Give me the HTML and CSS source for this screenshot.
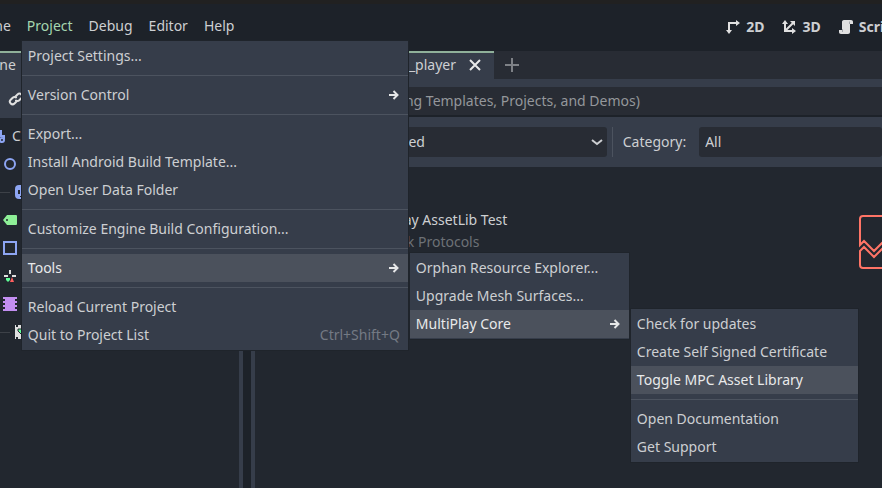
FILE: index.html
```html
<!DOCTYPE html>
<html lang="en">
<head>
    <meta charset="utf-8">
    <title>Editor</title>
    <link rel="stylesheet" href="styles.css">
</head>
<body>
    <header class="topbar">
        <nav class="menubar">
            <button class="menu-title">Scene</button>
            <div class="menu-holder">
                <button class="menu-title active">Project</button>
                <ul class="popup popup-project">
                    <li><button class="item">Project Settings...</button></li>
                    <li class="separator"></li>
                    <li><button class="item">Version Control
                        <svg class="arrow" width="10" height="10" viewBox="0 0 10 10"><path d="M0 5h8M4.500 1l4 4-4 4"/></svg></button></li>
                    <li class="separator"></li>
                    <li><button class="item">Export...</button></li>
                    <li><button class="item">Install Android Build Template...</button></li>
                    <li><button class="item">Open User Data Folder</button></li>
                    <li class="separator"></li>
                    <li><button class="item">Customize Engine Build Configuration...</button></li>
                    <li class="separator"></li>
                    <li class="has-sub">
                        <button class="item hover">Tools
                            <svg class="arrow" width="10" height="10" viewBox="0 0 10 10"><path d="M0 5h8M4.500 1l4 4-4 4"/></svg></button>
                        <ul class="popup popup-tools">
                            <li><button class="item">Orphan Resource Explorer...</button></li>
                            <li><button class="item">Upgrade Mesh Surfaces...</button></li>
                            <li class="has-sub">
                                <button class="item hover">MultiPlay Core
                                    <svg class="arrow" width="10" height="10" viewBox="0 0 10 10"><path d="M0 5h8M4.500 1l4 4-4 4"/></svg></button>
                                <ul class="popup popup-core">
                                    <li><button class="item">Check for updates</button></li>
                                    <li><button class="item">Create Self Signed Certificate</button></li>
                                    <li><button class="item hover">Toggle MPC Asset Library</button></li>
                                    <li class="separator"></li>
                                    <li><button class="item">Open Documentation</button></li>
                                    <li><button class="item">Get Support</button></li>
                                </ul>
                            </li>
                        </ul>
                    </li>
                    <li class="separator"></li>
                    <li><button class="item">Reload Current Project</button></li>
                    <li><button class="item">Quit to Project List <span class="shortcut">Ctrl+Shift+Q</span></button></li>
                </ul>
            </div>
            <button class="menu-title">Debug</button>
            <button class="menu-title">Editor</button>
            <button class="menu-title">Help</button>
        </nav>
        <div class="screens">
            <button class="screen">
                <svg width="16" height="16" viewBox="0 0 16 16"><path class="line" d="M4 12V4h8"/><path class="fill" d="M1 11h6L4 15zM11 1v6l4-3z"/></svg>
                2D
            </button>
            <button class="screen">
                <svg width="16" height="16" viewBox="0 0 16 16"><path class="line" d="M4 4v8h8M4 12l8-8"/><path class="fill" d="M1 5h6L4 1zM11 9v6l4-3zM9 2h5v5z"/></svg>
                3D
            </button>
            <button class="screen">
                <svg width="16" height="16" viewBox="0 0 16 16"><path class="fill" d="M6 1C4.500 1 4 2 4 3v8H1v2c0 1.300.7 2 2 2h7c1.300 0 2-.7 2-2V5h3V3c0-1.300-.7-2-2-2z"/><path class="cut" d="M4.500 10v3M11.500 5V2.500"/></svg>
                Script
            </button>
        </div>
    </header>

    <div class="workspace">
        <aside class="dock">
            <div class="tabs">
                <button class="tab dock-tab">Scene</button>
            </div>
            <div class="dock-tools">
                <svg width="16" height="16" viewBox="0 0 16 16"><g fill="none" stroke="#e0e0e0" stroke-width="2" stroke-linecap="round"><path d="M7.500 5.500l2-2a2.600 2.600 0 0 1 3.800 3.800l-2 2a2.600 2.600 0 0 1-3.300.2"/><path d="M8.500 10.500l-2 2a2.600 2.600 0 0 1-3.800-3.800l2-2a2.600 2.600 0 0 1 3.300-.2"/></g></svg>
            </div>
            <ul class="tree">
                <li class="root">
                    <svg width="16" height="16" viewBox="0 0 16 16"><g fill="none" stroke="#8da5f3" stroke-width="2"><path d="M12 2v5M10 8h5v3"/><circle cx="13" cy="12" r="2"/></g></svg>
                    Core
                </li>
                <li><svg width="16" height="16" viewBox="0 0 16 16"><circle cx="8" cy="8" r="5" fill="none" stroke="#8da5f3" stroke-width="2"/></svg></li>
                <li class="child"><svg width="16" height="16" viewBox="0 0 16 16"><path fill="#8da5f3" fill-rule="evenodd" d="M5 1h6a4 4 0 0 1 4 4v6a4 4 0 0 1-4 4H5a4 4 0 0 1-4-4V5a4 4 0 0 1 4-4zM4 6v4h2V6zM6 12v1h4v-1z"/></svg></li>
                <li><svg width="16" height="16" viewBox="0 0 16 16"><path fill="#8eef97" fill-rule="evenodd" d="M5 3h9q1 0 1 1v8q0 1-1 1H5L1 8zM5 7a1 1 0 1 0 0 2 1 1 0 0 0 0-2z"/></svg></li>
                <li><svg width="16" height="16" viewBox="0 0 16 16"><path fill="none" stroke="#8da5f3" stroke-width="2" d="M2 2h12v12H2z"/></svg></li>
                <li><svg width="16" height="16" viewBox="0 0 16 16"><path fill="#e0e0e0" d="M7 2h2v4H7zM2 7h4v2H2zM10 7h4v2h-4z"/><path fill="#5fff97" d="M4 10h4v2l-2 2-2-2z"/><path fill="#ff5f5f" d="M10 9l2 5H8z"/></svg></li>
                <li><svg width="16" height="16" viewBox="0 0 16 16"><path fill="#c38ef1" d="M1 1h14v2h-2v2h2v2h-2v2h2v2h-2v2h2v2H1v-2h2v-2H1V9h2V7H1V5h2V3H1z"/></svg></li>
                <li class="child"><svg width="16" height="16" viewBox="0 0 16 16"><path fill="#e0e0e0" d="M1 1h1v2h2V1h11v14H4v-2H2v2H1z"/><path fill="#5fff97" stroke="#22272f" d="M4 5h7v4l-3 2-4-4z"/></svg></li>
            </ul>
        </aside>

        <main class="main">
            <div class="tabs">
                <button class="tab scene-tab">test_player
                    <svg width="14" height="14" viewBox="0 0 14 14"><path d="M2 2l10 10M12 2L2 12" stroke="#e8e9ea" stroke-width="2"/></svg>
                </button>
                <button class="add-tab" aria-label="New scene">
                    <svg width="14" height="14" viewBox="0 0 14 14"><path d="M7 0v14M0 7h14" stroke="#7e8186" stroke-width="2"/></svg>
                </button>
            </div>
            <input class="search" type="text" aria-label="Search" placeholder="Search Assets (Excluding Templates, Projects, and Demos)">
            <div class="filters">
                <label for="sort">Sort:</label>
                <div class="select-wrap sort-wrap">
                    <select id="sort"><option>Recently Updated</option></select>
                    <svg class="chevron" width="12" height="12" viewBox="0 0 12 12"><path d="M1 4l5 4 5-4"/></svg>
                </div>
                <span class="divider"></span>
                <label for="category">Category:</label>
                <div class="select-wrap">
                    <select id="category"><option>All</option></select>
                </div>
            </div>
            <section class="assets">
                <article class="asset">
                    <a class="asset-name" href="#">MultiPlay AssetLib Test</a>
                    <a class="asset-category" href="#">Network Protocols</a>
                </article>
                <svg class="broken" width="64" height="64" viewBox="0 0 64 64"><path d="M6 35V9q0-3 3-3h46q3 0 3 3v26l-4-4-10 10-12-12-12 12-10-10zM6 41l4-4 10 10 12-12 12 12 10-10 4 4v14q0 3-3 3H9q-3 0-3-3z"/></svg>
            </section>
        </main>
    </div>
</body>
</html>
```
FILE: styles.css
```css
* {
    box-sizing: border-box;
}

body {
    margin: 0;
    height: 100vh;
    display: flex;
    flex-direction: column;
    overflow: hidden;
    border-top: 4px solid #212121;
    background-color: #1d2229;
    color: #cdcfd2;
    font-family: "Noto Sans", sans-serif;
    font-size: 14px;
    line-height: 20px;
}

button, input, select {
    font: inherit;
    color: inherit;
    background: none;
    border: none;
    margin: 0;
    padding: 0;
}

ul {
    list-style: none;
    margin: 0;
    padding: 0;
}

svg {
    display: block;
    flex: none;
}

a {
    color: inherit;
    text-decoration: none;
}

/* Top bar */
.topbar {
    display: flex;
    justify-content: space-between;
    align-items: center;
    height: 47px;
    padding-bottom: 3px;
    flex: none;
}

.menubar {
    display: flex;
    margin-left: -36px;
}

.menu-title {
    display: block;
    padding: 4px 8px;
}

.menu-title.active {
    color: #a5d6b0;
}

.menu-holder {
    position: relative;
}

.screens {
    display: flex;
    gap: 17px;
    margin-right: -17px;
    padding-top: 2px;
}

.screen {
    display: flex;
    align-items: center;
    gap: 5px;
    font-weight: bold;
}

.screen .line {
    fill: none;
    stroke: #e0e0e0;
    stroke-width: 2;
}

.screen .fill {
    fill: #e0e0e0;
}

.screen .cut {
    fill: none;
    stroke: #a5a8ac;
}

/* Popup menus */
.popup {
    position: absolute;
    z-index: 10;
    padding: 1px 0;
    background-color: #363d4a;
    box-shadow: 0 0 0 1px #1f242b;
}

.popup-project {
    left: 3px;
    top: 29px;
    width: 386px;
}

.popup-tools {
    left: 388px;
    top: -1px;
    width: 219px;
}

.popup-core {
    left: 221px;
    top: -1px;
    width: 227px;
}

.has-sub {
    position: relative;
}

.item {
    display: flex;
    justify-content: space-between;
    align-items: center;
    width: 100%;
    height: 28px;
    padding: 0 8px 0 6px;
    text-align: left;
    white-space: nowrap;
}

.item.hover {
    background-color: #4b515c;
    color: #e8e9ea;
}

.separator {
    height: 1px;
    margin: 5px 0;
    background-color: #4c535f;
}

.arrow {
    margin-right: 1px;
    fill: none;
    stroke: #e6e7e8;
    stroke-width: 2;
}

.shortcut {
    color: #747a84;
}

/* Docks */
.workspace {
    display: flex;
    flex: 1;
    gap: 8px;
    min-height: 0;
}

.dock {
    display: flex;
    flex-direction: column;
    width: 243px;
    flex: none;
    border-right: 4px solid #363d4a;
    background-color: #22272f;
}

.tabs {
    display: flex;
    height: 28px;
    background-color: #282c34;
}

.tab {
    border-top: 2px solid #8fb09a;
    padding-bottom: 2px;
    background-color: #363d4a;
}

.dock-tab {
    margin-left: -35px;
    padding-left: 12px;
    padding-right: 12px;
}

.dock-tools {
    height: 39px;
    padding: 12px 8px;
    background-color: #363d4a;
}

.tree {
    padding-top: 4px;
}

.tree li {
    display: flex;
    align-items: center;
    height: 28px;
    padding-left: 2px;
}

.tree .root {
    gap: 7px;
    margin-left: -13px;
}

.tree .child {
    gap: 4px;
    padding-left: 0;
}

.tree .child::before {
    content: "";
    width: 10px;
    height: 1px;
    background-color: #3d4148;
}

/* Asset library */
.main {
    display: flex;
    flex-direction: column;
    flex: 1;
    min-width: 0;
    border-left: 4px solid #363d4a;
    background-color: #22272f;
}

.scene-tab {
    display: flex;
    justify-content: flex-end;
    align-items: center;
    gap: 12px;
    width: 239px;
    padding-right: 12px;
}

.add-tab {
    padding: 0 11px;
}

.search {
    height: 38px;
    padding: 0 6px 2px;
    border-top: 8px solid #363d4a;
    border-bottom: 2px solid #1d2229;
    background-color: #282c34;
}

.search::placeholder {
    color: #94979b;
    opacity: 1;
}

.filters {
    display: flex;
    align-items: center;
    height: 50px;
    padding-left: 5px;
    background-color: #363d4a;
}

.select-wrap {
    position: relative;
    flex: 1;
    margin-left: 13px;
}

.sort-wrap {
    flex: none;
    width: 304px;
    margin-left: 12px;
}

.select-wrap select {
    display: block;
    appearance: none;
    width: 100%;
    height: 30px;
    padding: 0 6px;
    border-radius: 3px;
    background-color: #282c34;
}

.chevron {
    position: absolute;
    top: 9px;
    right: 4px;
    fill: none;
    stroke: #cdcfd2;
    stroke-width: 2;
    pointer-events: none;
}

.divider {
    width: 1px;
    height: 30px;
    margin: 0 10px 0 5px;
    background-color: #4c535f;
}

.assets {
    display: grid;
    grid-template-columns: 1fr 64px;
    margin-right: -36px;
    padding-top: 43px;
}

.asset {
    display: flex;
    flex-direction: column;
    gap: 2px;
    padding-left: 103px;
}

.asset-category {
    color: #6d7176;
}

.broken {
    fill: none;
    stroke: #ff7466;
    stroke-width: 2;
}
```
